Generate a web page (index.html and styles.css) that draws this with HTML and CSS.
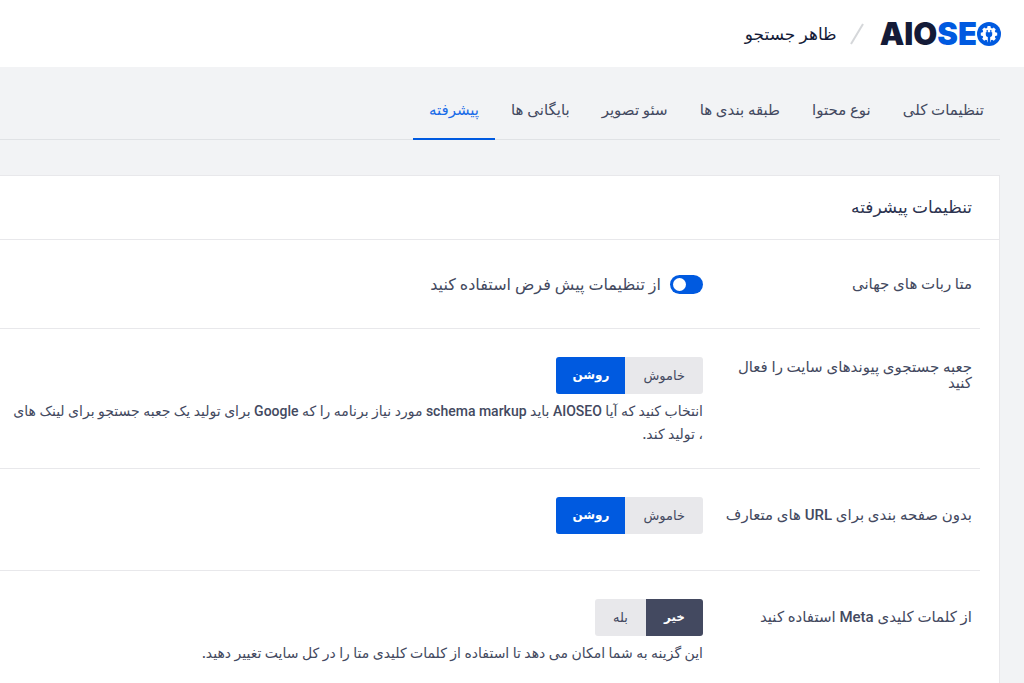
FILE: index.html
```html
<!DOCTYPE html>
<html lang="fa" dir="rtl">
<head>
  <meta charset="UTF-8" />
  <meta name="viewport" content="width=device-width, initial-scale=1.0" />
  <title>ظاهر جستجو - AIOSEO</title>
  <link rel="stylesheet" href="styles.css">
</head>
<body>
  <header class="header">
    <a class="logo" href="#" dir="ltr">
      <span class="logo-dark">AIO</span><span>SE</span>
      <svg class="logo-gear" viewBox="0 0 24 24" aria-hidden="true">
        <circle cx="12" cy="12" r="12" fill="#005ae0" />
        <path fill="#fff" d="M10.6 4h2.8l.5 1.9 1.2.5 1.7-1 2 2-1 1.7.5 1.2 1.9.5v2.6l-1.9.5-.5 1.2 1 1.7-2 2-1.7-1-1.2.5-.5 2h-2.8l-.5-2-1.2-.5-1.7 1-2-2 1-1.7-.5-1.2-1.9-.5v-2.6l1.9-.5.5-1.2-1-1.7 2-2 1.7 1 1.2-.5z" />
        <path fill="#005ae0" d="M9.600 8h1.200v2.200h2.400V8h1.200v2.200h.8v2.600c0 1.200-.8 2-2 2.300V21h-2.400v-5.900c-1.200-.3-2-1.100-2-2.300v-2.600h.8z" />
      </svg>
    </a>
    <svg class="slash" viewBox="0 0 14 22" aria-hidden="true">
      <path d="M13 1L1 21" stroke="#d5d7da" stroke-width="2" />
    </svg>
    <h1 class="page-title">ظاهر جستجو</h1>
  </header>

  <nav class="tabs">
    <a class="tab" href="#">تنظیمات کلی</a>
    <a class="tab" href="#">نوع محتوا</a>
    <a class="tab" href="#">طبقه بندی ها</a>
    <a class="tab" href="#">سئو تصویر</a>
    <a class="tab" href="#">بایگانی ها</a>
    <a class="tab active" href="#">پیشرفته</a>
  </nav>

  <main class="card">
    <h2 class="card-title">تنظیمات پیشرفته</h2>

    <div class="row row-short">
      <div class="row-name">متا ربات های جهانی</div>
      <div class="row-content">
        <label class="toggle">
          <input type="checkbox" checked />
          <span>از تنظیمات پیش فرض استفاده کنید</span>
        </label>
      </div>
    </div>

    <div class="row">
      <div class="row-name" id="sitelinks">جعبه جستجوی پیوندهای سایت را فعال کنید</div>
      <div class="row-content">
        <div class="switch" role="radiogroup" aria-labelledby="sitelinks">
          <label class="option"><input type="radio" name="sitelinks" />خاموش</label>
          <label class="option"><input type="radio" name="sitelinks" checked />روشن</label>
        </div>
        <p class="description">انتخاب کنید که آیا AIOSEO باید schema markup مورد نیاز برنامه را که Google برای تولید یک جعبه جستجو برای لینک های<br>، تولید کند.</p>
      </div>
    </div>

    <div class="row">
      <div class="row-name" id="pagination">بدون صفحه بندی برای URL های متعارف</div>
      <div class="row-content">
        <div class="switch" role="radiogroup" aria-labelledby="pagination">
          <label class="option"><input type="radio" name="pagination" />خاموش</label>
          <label class="option"><input type="radio" name="pagination" checked />روشن</label>
        </div>
      </div>
    </div>

    <div class="row">
      <div class="row-name" id="keywords">از کلمات کلیدی Meta استفاده کنید</div>
      <div class="row-content">
        <div class="switch" role="radiogroup" aria-labelledby="keywords">
          <label class="option option-no"><input type="radio" name="keywords" checked />خیر</label>
          <label class="option"><input type="radio" name="keywords" />بله</label>
        </div>
        <p class="description">این گزینه به شما امکان می دهد تا استفاده از کلمات کلیدی متا را در کل سایت تغییر دهید.</p>
      </div>
    </div>
  </main>
</body>
</html>
```

FILE: styles.css
```css
* {
  box-sizing: border-box;
}
html {
  overflow: hidden;
}
body {
  margin: 0;
  font-family: Roboto, "DejaVu Sans", sans-serif;
  font-size: 14px;
  font-weight: 500;
  color: #434960;
  background-color: #f2f3f5;
}
h1, h2, p {
  margin: 0;
}

.header {
  display: flex;
  align-items: center;
  height: 67px;
  padding: 0 23px;
  background-color: #fff;
}
.logo {
  display: flex;
  align-items: center;
  font-family: Inter, sans-serif;
  font-size: 31px;
  font-weight: 900;
  line-height: 36px;
  color: #005ae0;
  text-decoration: none;
}
.logo-dark {
  color: #141b38;
}
.logo-gear {
  width: 24px;
  height: 24px;
}
.slash {
  width: 14px;
  height: 22px;
  margin: 0 16px 0 13px;
}
.page-title {
  font-size: 17px;
  font-weight: 500;
  line-height: 20px;
  color: #141b38;
}

.tabs {
  display: flex;
  margin-right: 24px;
  padding-top: 24px;
  border-bottom: 1px solid #e0e2e5;
}
.tab {
  height: 49px;
  margin-bottom: -1px;
  padding: 0 16px;
  border-bottom: 2px solid transparent;
  font-size: 15px;
  line-height: 38px;
  color: #434960;
  text-decoration: none;
}
.tab.active {
  color: #1a6ce8;
  border-bottom-color: #005ae0;
}

.card {
  margin: 35px 24px 0 0;
  background-color: #fff;
  border: 1px solid #e8e8eb;
  border-left: none;
}
.card-title {
  padding: 0 27px;
  border-bottom: 1px solid #e8e8eb;
  font-size: 17px;
  font-weight: 500;
  line-height: 63px;
  color: #2c3350;
}
.row {
  display: flex;
  align-items: flex-start;
  margin-right: 19px;
  padding: 28px 8px 22px;
  border-bottom: 1px solid #e8e8eb;
}
.row:last-child {
  border-bottom: none;
}
.row-name {
  display: flex;
  align-items: center;
  width: 250px;
  min-height: 36px;
  margin-left: 19px;
  font-size: 15px;
  line-height: 16px;
}
.row-content {
  flex: 1;
  min-height: 51px;
}
.row-short .row-name {
  min-height: 32px;
}
.row-short .row-content {
  min-height: 38px;
}

.toggle {
  display: flex;
  align-items: center;
  gap: 9px;
  height: 32px;
  font-size: 16px;
}
.toggle input {
  display: flex;
  align-items: center;
  justify-content: flex-end;
  appearance: none;
  width: 33px;
  height: 19px;
  margin: 0;
  padding: 0 3px;
  border-radius: 10px;
  background-color: #005ae0;
}
.toggle input::before {
  content: "";
  width: 13px;
  height: 13px;
  border-radius: 50%;
  background-color: #fff;
}

.switch {
  display: flex;
  width: fit-content;
  border-radius: 3px;
  overflow: hidden;
}
.option {
  padding: 0 18px;
  font-size: 13px;
  line-height: 37px;
  background-color: #e8e8eb;
  cursor: pointer;
}
.option input {
  position: absolute;
  appearance: none;
  margin: 0;
}
.option:has(input:checked) {
  padding: 0 16px;
  font-size: 12px;
  font-weight: 700;
  color: #fff;
  background-color: #005ae0;
}
.option-no:has(input:checked) {
  padding: 0 18px;
  background-color: #434960;
}
.description {
  margin-top: 6px;
  font-size: 14px;
  line-height: 23px;
}
```
